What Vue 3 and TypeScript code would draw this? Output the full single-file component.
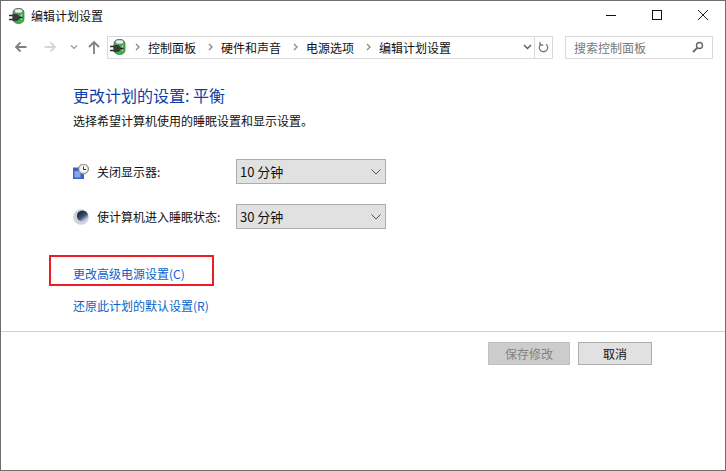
<script setup lang="ts">
const crumbs: string[] = ['控制面板', '硬件和声音', '电源选项', '编辑计划设置']
const settings = [
  { label: '关闭显示器:', value: '10 分钟', icon: 'monitor' },
  { label: '使计算机进入睡眠状态:', value: '30 分钟', icon: 'moon' },
]
</script>

<template>
  <div class="window">
    <header class="titlebar">
      <svg class="plug" width="16" height="16" viewBox="0 0 16 16">
        <path d="M4 4.500C4 2 6.500 .5 9.500 .5S15 2 15 4.500v6.500c0 2.800-2.300 4.500-5.500 4.500S4 13.800 4 11z" fill="#3fb04a" stroke="#2c7a38" stroke-width=".7" />
        <ellipse cx="9.500" cy="3" rx="4.500" ry="2.300" fill="#e6ece6" stroke="#5a5a5a" stroke-width=".8" />
        <path d="M12.500 6v6" stroke="#a6e0a8" stroke-width="1.200" />
        <path d="M0 7.500h4.500M0 11.500h4.500" stroke="#2e2e2e" stroke-width="1.300" />
        <path d="M3.500 6h3.500c2 0 3.500 1.300 3.500 3.500S9 13 7 13H3.500z" fill="#3a3a3a" />
        <path d="M10 9.500h3.500" stroke="#222" stroke-width="1.500" />
      </svg>
      <span class="title">编辑计划设置</span>
      <div class="controls">
        <svg width="12" height="12" viewBox="0 0 12 12"><path d="M1 6.500h10" stroke="#111" /></svg>
        <svg width="12" height="12" viewBox="0 0 12 12"><rect x="1.500" y="1.500" width="9" height="9" fill="none" stroke="#111" /></svg>
        <svg width="12" height="12" viewBox="0 0 12 12"><path d="M1 1l10 10M11 1L1 11" stroke="#222" /></svg>
      </div>
    </header>

    <nav class="navbar">
      <div class="arrows">
        <svg width="13" height="12" viewBox="0 0 13 12"><path d="M12.500 6H2M6.500 1.500L2 6l4.500 4.500" fill="none" stroke="#808080" stroke-width="1.800" /></svg>
        <svg width="13" height="12" viewBox="0 0 13 12"><path d="M.5 6H11M6.500 1.500L11 6l-4.500 4.500" fill="none" stroke="#d6d6d6" stroke-width="1.800" /></svg>
        <svg width="8" height="6" viewBox="0 0 8 6"><path d="M1 1.500l3 3 3-3" fill="none" stroke="#999" stroke-width="1.200" /></svg>
        <svg width="12" height="14" viewBox="0 0 12 14"><path d="M6 14V2M1 7l5-5 5 5" fill="none" stroke="#808080" stroke-width="1.800" /></svg>
      </div>
      <div class="address">
        <svg class="plug" width="16" height="16" viewBox="0 0 16 16">
          <path d="M4 4.500C4 2 6.500 .5 9.500 .5S15 2 15 4.500v6.500c0 2.800-2.300 4.500-5.500 4.500S4 13.800 4 11z" fill="#3fb04a" stroke="#2c7a38" stroke-width=".7" />
          <ellipse cx="9.500" cy="3" rx="4.500" ry="2.300" fill="#e6ece6" stroke="#5a5a5a" stroke-width=".8" />
          <path d="M12.500 6v6" stroke="#a6e0a8" stroke-width="1.200" />
          <path d="M0 7.500h4.500M0 11.500h4.500" stroke="#2e2e2e" stroke-width="1.300" />
          <path d="M3.500 6h3.500c2 0 3.500 1.300 3.500 3.500S9 13 7 13H3.500z" fill="#3a3a3a" />
          <path d="M10 9.500h3.500" stroke="#222" stroke-width="1.500" />
        </svg>
        <div class="crumbs">
          <template v-for="c in crumbs" :key="c">
            <svg class="sep" width="5" height="8" viewBox="0 0 5 8"><path d="M1 1l3 3-3 3" fill="none" stroke="#888" stroke-width="1.300" /></svg>
            <span>{{ c }}</span>
          </template>
        </div>
        <svg class="drop" width="9" height="6" viewBox="0 0 9 6"><path d="M1 1l3.500 3.500L8 1" fill="none" stroke="#555" stroke-width="1.300" /></svg>
        <div class="refresh">
          <svg width="11" height="13" viewBox="0 0 11 13"><path d="M3 3.200a4.200 4.200 0 1 0 5 0M2 1v3h3.200" fill="none" stroke="#777" stroke-width="1.300" /></svg>
        </div>
      </div>
      <div class="search">
        <span>搜索控制面板</span>
        <svg width="12" height="12" viewBox="0 0 12 12"><circle cx="7.500" cy="4.500" r="3" fill="none" stroke="#666" stroke-width="1.400" /><path d="M5.200 6.800L1 11" stroke="#666" stroke-width="1.800" /></svg>
      </div>
    </nav>

    <main class="content">
      <h1>更改计划的设置: 平衡</h1>
      <p class="hint">选择希望计算机使用的睡眠设置和显示设置。</p>

      <div class="settings">
        <div v-for="s in settings" :key="s.icon" class="row">
          <svg v-if="s.icon === 'monitor'" class="ico" width="16" height="16" viewBox="0 0 16 16">
            <path d="M0 3.500h11V15H0z" fill="#3a62c6" />
            <path d="M1.500 7h6v6.500h-6z" fill="#86a6ea" />
            <circle cx="10.500" cy="5" r="5" fill="#dcdcdc" stroke="#808080" />
            <circle cx="10.500" cy="5" r="3.300" fill="#fafafa" />
            <path d="M10.500 2.500V5.500H13" fill="none" stroke="#333" />
          </svg>
          <svg v-else class="ico" width="16" height="16" viewBox="0 0 16 16">
            <defs>
              <linearGradient id="m" x1=".3" y1=".1" x2=".85" y2=".9">
                <stop offset="0" stop-color="#23283a" />
                <stop offset=".5" stop-color="#3c4c70" />
                <stop offset="1" stop-color="#dbe6fb" />
              </linearGradient>
            </defs>
            <circle cx="8" cy="8" r="7.800" fill="#cdd2db" />
            <circle cx="9.500" cy="7" r="5.600" fill="url(#m)" />
          </svg>
          <span class="label">{{ s.label }}</span>
          <div class="select">
            <span>{{ s.value }}</span>
            <svg width="10" height="6" viewBox="0 0 10 6"><path d="M.5 .5L5 5 9.500 .5" fill="none" stroke="#555" /></svg>
          </div>
        </div>
      </div>

      <div class="highlight"><a>更改高级电源设置(C)</a></div>
      <a class="restore">还原此计划的默认设置(R)</a>
    </main>

    <footer class="footer">
      <button class="btn disabled">保存修改</button>
      <button class="btn">取消</button>
    </footer>
  </div>
</template>

<style>
html, body { margin: 0; background: #fff; }
</style>

<style scoped>
.window {
  box-sizing: border-box;
  width: 726px;
  height: 471px;
  border: 1px solid #6e6e6e;
  background: #fff;
  font-family: "Noto Sans CJK SC", "Noto Sans", sans-serif;
  font-size: 12px;
  color: #111;
  display: flex;
  flex-direction: column;
  overflow: hidden;
}
.titlebar {
  height: 30px;
  display: flex;
  align-items: center;
  padding-left: 8px;
  flex: none;
}
.title { margin-left: 6px; line-height: 16px; }
.controls {
  margin-left: auto;
  display: flex;
  align-items: center;
  gap: 34px;
  padding: 0 16px 2px 0;
}
.navbar {
  height: 22px;
  margin-top: 5px;
  display: flex;
  align-items: center;
  flex: none;
}
.arrows {
  width: 106px;
  box-sizing: border-box;
  padding-left: 13px;
  display: flex;
  align-items: center;
}
.arrows svg:nth-child(2) { margin-left: 17px; }
.arrows svg:nth-child(3) { margin-left: 13px; }
.arrows svg:nth-child(4) { margin-left: 10px; }
.address {
  box-sizing: border-box;
  width: 446px;
  height: 23px;
  border: 1px solid #d9d9d9;
  display: flex;
  align-items: center;
  padding-left: 2px;
}
.crumbs {
  display: flex;
  align-items: center;
  margin-left: 9px;
  gap: 8px;
}
.crumbs span { margin-right: 4px; }
.sep { flex: none; }
.drop { margin-left: auto; margin-right: 2px; }
.refresh {
  width: 17px;
  height: 21px;
  border-left: 1px solid #d9d9d9;
  display: flex;
  align-items: center;
  justify-content: center;
}
.search {
  box-sizing: border-box;
  width: 148px;
  height: 23px;
  margin-left: 12px;
  border: 1px solid #d9d9d9;
  display: flex;
  align-items: center;
  justify-content: space-between;
  padding: 0 8px;
  color: #777;
}
.content {
  flex: 1;
  padding: 25px 0 0 72px;
  position: relative;
}
h1 {
  margin: 0;
  font-size: 16px;
  font-weight: 400;
  line-height: 24px;
  color: #0c3ea8;
}
.hint { margin: 6px 0 0; line-height: 16px; }
.settings { margin-top: 30px; display: flex; flex-direction: column; gap: 20px; }
.row { display: flex; align-items: center; height: 25px; }
.ico { flex: none; }
.label { margin-left: 8px; width: 139px; flex: none; line-height: 16px; }
.select {
  box-sizing: border-box;
  width: 150px;
  height: 25px;
  background: #e1e1e1;
  border: 1px solid #adadad;
  display: flex;
  align-items: center;
  justify-content: space-between;
  padding: 0 4px 0 3px;
  font-size: 13px;
}
a { color: #0a62c9; display: block; line-height: 16px; }
.highlight {
  box-sizing: border-box;
  width: 165px;
  height: 31px;
  margin: 26px 0 0 -24px;
  border: 2px solid #ee1c25;
  padding: 9px 0 0 22px;
}
.highlight a { white-space: nowrap; }
.restore { margin-top: 12px; }
.footer {
  flex: none;
  height: 139px;
  box-sizing: border-box;
  border-top: 1px solid #cfcfcf;
  padding: 10px 73px 0 0;
  display: flex;
  justify-content: flex-end;
  align-items: flex-start;
  gap: 8px;
}
.btn {
  box-sizing: border-box;
  height: 23px;
  font: inherit;
  padding: 0;
  width: 74px;
  background: #e1e1e1;
  border: 1px solid #adadad;
  color: #111;
}
.btn.disabled {
  width: 82px;
  background: #cccccc;
  border-color: #bfbfbf;
  color: #838383;
}
</style>
